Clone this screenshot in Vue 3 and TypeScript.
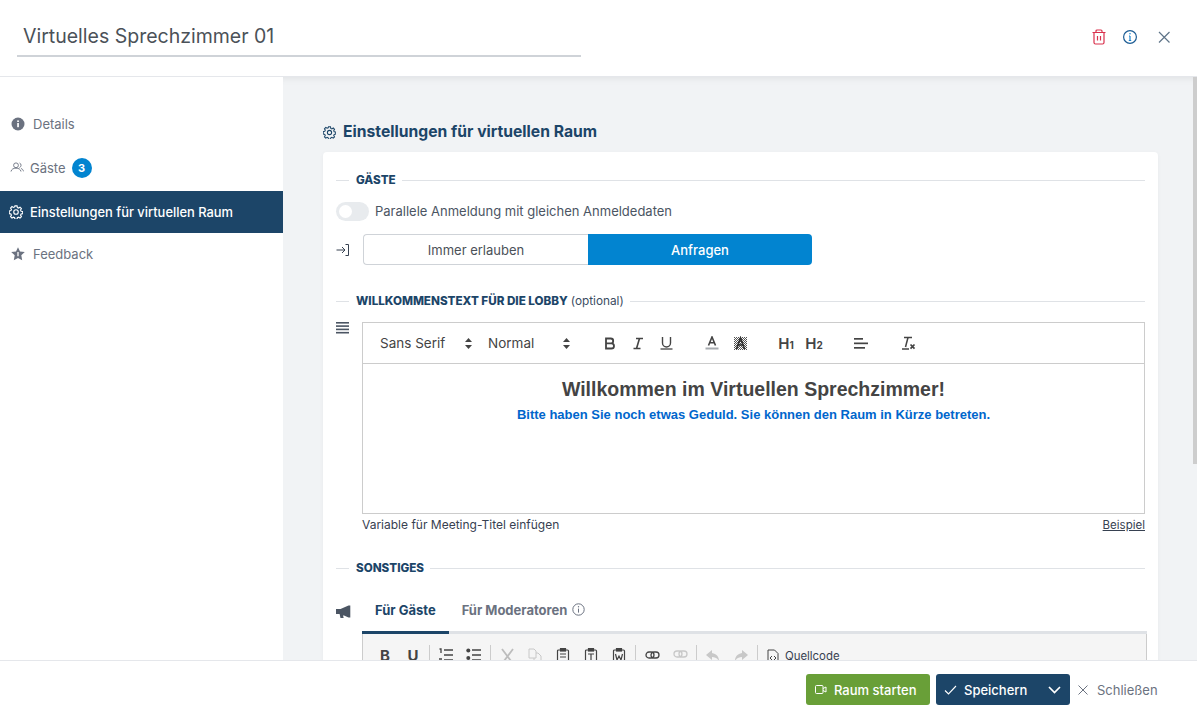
<script setup lang="ts">
const nav = [
  { key: 'details', label: 'Details' },
  { key: 'guests', label: 'Gäste', badge: 3 },
  { key: 'settings', label: 'Einstellungen für virtuellen Raum', active: true },
  { key: 'feedback', label: 'Feedback' },
]
</script>

<template>
  <div class="app">
    <header class="top">
      <div class="title">Virtuelles Sprechzimmer 01</div>
      <div class="top-icons">
        <svg width="16" height="16" viewBox="0 0 16 16" fill="none" stroke="#d9304c" stroke-width="1.2"><path d="M1.5 3.5h13M3 3.500v10a1.500 1.500 0 0 0 1.500 1.500h7a1.500 1.500 0 0 0 1.500-1.500v-10M5 3.500V2a1 1 0 0 1 1-1h4a1 1 0 0 1 1 1v1.500M6.500 7v4.500M9.500 7v4.500"/></svg>
        <svg width="16" height="16" viewBox="0 0 16 16" fill="none" stroke="#1c5c94" stroke-width="1.2"><circle cx="8" cy="8" r="6.4"/><path d="M8 7v4.500M6.800 11.500h2.400M7 7h1" stroke="#1b84cc"/><circle cx="8" cy="4.800" r=".8" fill="#1b84cc" stroke="none"/></svg>
        <svg class="x" width="16" height="16" viewBox="0 0 16 16" fill="none" stroke="#5f7488" stroke-width="1.2"><path d="M3 3l10.500 10.500M13.500 3L3 13.500"/></svg>
      </div>
    </header>

    <div class="middle">
      <aside class="side">
        <div v-for="n in nav" :key="n.key" class="nav" :class="[n.key, { active: n.active }]">
          <svg v-if="n.key === 'details'" width="14" height="14" viewBox="0 0 14 14"><circle cx="7" cy="7" r="6.500" fill="#6b7280"/><rect x="6.200" y="6" width="1.700" height="4.200" fill="#fff"/><rect x="6.200" y="3.400" width="1.700" height="1.600" fill="#fff"/></svg>
          <svg v-else-if="n.key === 'guests'" width="14" height="14" viewBox="0 0 14 14" fill="none" stroke="#6b7280" stroke-width=".9"><circle cx="6" cy="4.300" r="2.400"/><path d="M1 10.500c.5-2.500 2.500-3.300 5-3.300s4.500.8 5 3.300M9.500 2a2.400 2.400 0 0 1 0 4.500M11 7.500c1.300.4 2.200 1.300 2.500 2.800"/></svg>
          <svg v-else-if="n.key === 'settings'" width="14" height="14" viewBox="0 0 16 16" fill="none" stroke="#fff" stroke-width="1.300"><path d="M6.800 1h2.400l.4 1.900 1.300.6 1.700-1 1.600 1.600-1 1.700.6 1.300 1.900.4v2.400l-1.900.4-.6 1.300 1 1.700-1.600 1.600-1.700-1-1.300.6-.4 1.900H6.800l-.4-1.900-1.300-.6-1.700 1-1.600-1.600 1-1.700-.6-1.300-1.900-.4V6.800l1.900-.4.6-1.300-1-1.700 1.600-1.600 1.700 1 1.300-.6z"/><circle cx="8" cy="8" r="2.600"/></svg>
          <svg v-else width="14" height="14" viewBox="0 0 14 14"><path d="M7 .2l2 4.300 4.800.6-3.500 3.200.9 4.900L7 10.900l-4.200 2.300.9-4.900L.2 5.100 5 4.500z" fill="#6b7280"/><path d="M7 5v4.300" stroke="#fff" stroke-width="1.300"/></svg>
          <span>{{ n.label }}</span>
          <span v-if="n.badge" class="badge">{{ n.badge }}</span>
        </div>
      </aside>

      <main class="content">
        <h1 class="heading">
          <svg width="13" height="13" viewBox="0 0 16 16" fill="none" stroke="#1c4568" stroke-width="1.300"><path d="M6.800 1h2.400l.4 1.900 1.300.6 1.700-1 1.600 1.600-1 1.700.6 1.300 1.900.4v2.400l-1.900.4-.6 1.300 1 1.700-1.600 1.600-1.700-1-1.300.6-.4 1.900H6.800l-.4-1.900-1.300-.6-1.700 1-1.600-1.600 1-1.700-.6-1.300-1.900-.4V6.800l1.900-.4.6-1.300-1-1.700 1.600-1.600 1.700 1 1.300-.6z"/><circle cx="8" cy="8" r="2.600"/></svg>
          <span>Einstellungen für virtuellen Raum</span>
        </h1>

        <section class="card">
          <div class="legend first"><b>GÄSTE</b></div>

          <div class="toggle-row">
            <span class="toggle"><i></i></span>
            <span>Parallele Anmeldung mit gleichen Anmeldedaten</span>
          </div>

          <div class="seg-row">
            <svg width="14" height="14" viewBox="0 0 14 14" fill="none" stroke="#374151" stroke-width="1"><path d="M.5 7h8M6 4l3 3-3 3M9.500 1.500h3v11h-3"/></svg>
            <div class="seg">
              <span class="seg-a">Immer erlauben</span>
              <span class="seg-b">Anfragen</span>
            </div>
          </div>

          <div class="legend lobby"><b>WILLKOMMENSTEXT FÜR DIE LOBBY</b><span>(optional)</span></div>

          <div class="editor-row">
            <svg class="lines" width="13" height="12" viewBox="0 0 13 12" fill="#4b5563"><rect y="0" width="13" height="1.600"/><rect y="3.300" width="13" height="1.600"/><rect y="6.600" width="13" height="1.600"/><rect y="9.900" width="13" height="1.600"/></svg>
            <div class="editor-col">
              <div class="editor">
                <div class="tb">
                  <span class="pick p1">Sans Serif<svg width="7" height="11" viewBox="0 0 7 11" fill="#444"><path d="M3.500 0L7 4H0zM3.500 11L0 7h7z"/></svg></span>
                  <span class="pick p2">Normal<svg width="7" height="11" viewBox="0 0 7 11" fill="#444"><path d="M3.500 0L7 4H0zM3.500 11L0 7h7z"/></svg></span>
                  <div class="group g1">
                    <span class="tbtn"><svg width="12" height="13" viewBox="0 0 12 13" fill="none" stroke="#444" stroke-width="1.800"><path d="M2 1.500h4.800a2.400 2.400 0 0 1 0 4.800H2zM2 6.300h5.400a2.600 2.600 0 0 1 0 5.200H2z"/></svg></span>
                    <span class="tbtn"><svg width="12" height="13" viewBox="0 0 12 13" fill="none" stroke="#444" stroke-width="1.600"><path d="M4 1.500h7M1.500 11.500h7M7.500 1.500l-3 10"/></svg></span>
                    <span class="tbtn"><svg width="13" height="14" viewBox="0 0 13 14" fill="none" stroke="#444" stroke-width="1.400"><path d="M2.500 1v6a4 4 0 0 0 8 0V1"/><path d="M.5 13h12" stroke-width="1.300"/></svg></span>
                  </div>
                  <div class="group">
                    <span class="tbtn"><svg width="14" height="14" viewBox="0 0 14 14" fill="none"><path d="M3.500 9.500l3.500-8.500 3.500 8.500M4.700 6.800h4.600" stroke="#444" stroke-width="1.600"/><rect x="0.500" y="11.500" width="13" height="2" fill="#a7abb0"/></svg></span>
                    <span class="tbtn"><svg width="15" height="15" viewBox="0 0 15 15" fill="none"><defs><pattern id="dots" width="2" height="2" patternUnits="userSpaceOnUse"><rect width="1" height="1" fill="#555"/><rect x="1" y="1" width="1" height="1" fill="#555"/></pattern></defs><path d="M1 1h13v13H1zM1 1" fill="url(#dots)"/><path d="M3.500 13l4-11 4 11M5 9h5" stroke="#333" stroke-width="1.700"/></svg></span>
                  </div>
                  <div class="group">
                    <span class="tbtn hd">H<small>1</small></span>
                    <span class="tbtn hd">H<small>2</small></span>
                  </div>
                  <div class="group g4">
                    <span class="tbtn"><svg width="14" height="11" viewBox="0 0 14 11" fill="#444"><rect width="9" height="1.700"/><rect y="4.500" width="14" height="1.700"/><rect y="9" width="11" height="1.700"/></svg></span>
                  </div>
                  <div class="group g5">
                    <span class="tbtn"><svg width="15" height="14" viewBox="0 0 15 14" fill="none" stroke="#444"><path d="M3 1.500h8M1 13h7" stroke-width="1.300"/><path d="M7 1.500l-2.500 9.500" stroke-width="1.500"/><path d="M9.500 8.500l4 4.200M13.500 8.500l-4 4.200" stroke-width="1.700"/></svg></span>
                  </div>
                </div>
                <div class="body">
                  <h2>Willkommen im Virtuellen Sprechzimmer!</h2>
                  <p>Bitte haben Sie noch etwas Geduld. Sie können den Raum in Kürze betreten.</p>
                </div>
              </div>
              <div class="under">
                <span>Variable für Meeting-Titel einfügen</span>
                <u>Beispiel</u>
              </div>
            </div>
          </div>

          <div class="legend other"><b>SONSTIGES</b></div>

          <div class="tabs-row">
            <svg class="horn" width="15" height="13" viewBox="0 0 15 13" fill="#4b5563"><path d="M0 4h4.500L12.500.5h1.800v12h-1.800L8 10.400H7l.7 2.600H4.500L3.600 9H0z"/></svg>
            <div class="tabs-col">
              <div class="tabs">
                <span class="tab on">Für Gäste</span>
                <span class="tab">Für Moderatoren
                  <svg width="13" height="13" viewBox="0 0 13 13" fill="none" stroke="#6b7280" stroke-width="1"><circle cx="6.500" cy="6.500" r="5.700"/><path d="M6.500 5.600v4"/><circle cx="6.500" cy="3.700" r=".7" fill="#6b7280" stroke="none"/></svg>
                </span>
              </div>
              <div class="tiny">
                <span class="cb ltr">B</span>
                <span class="cb ltr">U</span>
                <i class="sep"></i>
                <span class="cb"><svg width="16" height="14" viewBox="0 0 16 14" stroke="#444" fill="none" stroke-width="1.300"><path d="M6 2h9M6 7h9M6 12h9M1.500 1h1.500v4M1 11h3"/></svg></span>
                <span class="cb"><svg width="16" height="14" viewBox="0 0 16 14" stroke="#444" fill="none" stroke-width="1.300"><path d="M6 2h9M6 7h9M6 12h9"/><circle cx="2.300" cy="2.500" r="2" fill="#444" stroke="none"/><circle cx="2.300" cy="10" r="2" fill="#444" stroke="none"/></svg></span>
                <i class="sep"></i>
                <span class="cb"><svg width="15" height="15" viewBox="0 0 15 15" stroke="#bdbdbd" fill="none" stroke-width="1.800"><path d="M2 1l9 12M13 1L4 13"/></svg></span>
                <span class="cb"><svg width="14" height="15" viewBox="0 0 14 15" stroke="#c8c8c8" fill="none"><path d="M1 1h5l2 2v7H1zM8 5h2l3 3v6H6v-4"/></svg></span>
                <span class="cb"><svg width="14" height="15" viewBox="0 0 14 15" stroke="#444" fill="none" stroke-width="1.200"><rect x="1.500" y="2" width="11" height="12" rx="1"/><rect x="4.500" y=".5" width="5" height="2.500" fill="#444"/><path d="M4 6h6M4 9h6"/></svg></span>
                <span class="cb"><svg width="14" height="15" viewBox="0 0 14 15" stroke="#444" fill="none" stroke-width="1.200"><rect x="1.500" y="2" width="11" height="12" rx="1"/><rect x="4.500" y=".5" width="5" height="2.500" fill="#444"/><path d="M4 6h6M7 6v6"/></svg></span>
                <span class="cb"><svg width="14" height="15" viewBox="0 0 14 15" stroke="#444" fill="none" stroke-width="1.200"><rect x="1.500" y="2" width="11" height="12" rx="1"/><rect x="4.500" y=".5" width="5" height="2.500" fill="#444"/><path d="M3.500 6l1.500 6 2-4 2 4 1.500-6"/></svg></span>
                <i class="sep"></i>
                <span class="cb"><svg width="15" height="14" viewBox="0 0 15 14" stroke="#444" fill="none" stroke-width="1.300"><rect x="1" y="4" width="8" height="6" rx="3"/><rect x="6" y="4" width="8" height="6" rx="3"/></svg></span>
                <span class="cb"><svg width="15" height="14" viewBox="0 0 15 14" stroke="#c8c8c8" fill="none" stroke-width="1.300"><rect x="1" y="3" width="8" height="6" rx="3"/><rect x="6" y="3" width="8" height="6" rx="3"/></svg></span>
                <i class="sep"></i>
                <span class="cb"><svg width="16" height="14" viewBox="0 0 16 14" fill="#c8c8c8"><path d="M7 2L1 7l6 5V9c3 0 5 1 7 4 0-4-2-7-7-8z"/></svg></span>
                <span class="cb"><svg width="16" height="14" viewBox="0 0 16 14" fill="#c8c8c8"><path d="M9 2l6 5-6 5V9c-3 0-5 1-7 4 0-4 2-7 7-8z"/></svg></span>
                <i class="sep"></i>
                <svg class="srci" width="12" height="15" viewBox="0 0 12 15" stroke="#444" fill="none"><path d="M1 1h6.500L11 4.500V14H1zM5 7L3 9l2 2M7 7l2 2-2 2"/></svg>
                <span class="src">Quellcode</span>
              </div>
            </div>
          </div>
        </section>
      </main>
      <div class="scroll"></div>
    </div>

    <footer class="foot">
      <button class="btn green">
        <svg width="12" height="11" viewBox="0 0 12 11" fill="none" stroke="#fff"><rect x=".5" y="1.500" width="7.500" height="8" rx="1"/><path d="M8 4.500l3-1.500v5L8 6.500"/></svg>
        Raum starten
      </button>
      <div class="btn navy">
        <svg width="13" height="10" viewBox="0 0 13 10" fill="none" stroke="#fff" stroke-width="1.100"><path d="M1 5.500l3.500 3.500L12 1"/></svg>
        <span>Speichern</span>
        <svg class="chev" width="13" height="8" viewBox="0 0 13 8" fill="none" stroke="#fff" stroke-width="1.700"><path d="M1 1l5.500 5.500L12 1"/></svg>
      </div>
      <div class="close">
        <svg width="10" height="10" viewBox="0 0 10 10" fill="none" stroke="#6b7280" stroke-width="1"><path d="M.5.500l9 9M9.500.500l-9 9"/></svg>
        Schließen
      </div>
    </footer>
  </div>
</template>

<style>
html, body { margin: 0; height: 100%; overflow: hidden; background: #fff; }
</style>

<style scoped>
.app { width: 1197px; height: 717px; display: flex; flex-direction: column; font-family: Inter, "Liberation Sans", sans-serif; color: #374151; overflow: hidden; }
.top { height: 76px; flex: none; display: flex; justify-content: space-between; align-items: flex-start; border-bottom: 1px solid #e5e7eb; box-sizing: content-box; position: relative; z-index: 2; }
.title { margin: 21px 0 0 17px; padding-left: 6px; width: 558px; height: 34px; border-bottom: 2px solid #cfd3d8; font-size: 19.500px; line-height: 31px; color: #4b5158; }
.top-icons { display: flex; gap: 15px; margin: 29px 25px 0 0; }
.top-icons .x { margin-left: 3px; }
.middle { flex: 1; min-height: 0; display: flex; position: relative; }
.side { width: 283px; flex: none; padding-top: 26px; background: #fff; box-sizing: border-box; }
.nav { height: 42px; display: flex; align-items: center; font-size: 13px; color: #6b7280; padding-left: 11px; gap: 8px; }
.nav.details { margin-bottom: -2px; }
.nav.guests { height: 48px; padding-top: 1px; box-sizing: border-box; padding-left: 10px; gap: 6px; }
.nav.settings { padding-left: 9px; gap: 7px; background: #1c4568; color: #fff; font-size: 12.900px; font-weight: 500; }
.nav.feedback { gap: 8px; }
.badge { width: 20px; height: 20px; border-radius: 50%; background: #0284d0; color: #fff; font-size: 11px; font-weight: 700; display: flex; align-items: center; justify-content: center; }
.content { flex: 1; min-width: 0; background: #f1f3f5; box-shadow: inset 0 8px 8px -8px rgba(0,0,0,.1); padding: 46px 39px 0 40px; overflow: hidden; box-sizing: border-box; }
.heading { margin: 0 0 11px; display: flex; align-items: center; gap: 7px; font-size: 15.700px; line-height: 18px; font-weight: 700; color: #1c4568; height: 18px; }
.card { background: #fff; border-radius: 4px; height: 600px; padding: 20px 13px 0; box-sizing: border-box; box-shadow: 0 1px 4px rgba(0,0,0,.04); }
.legend { display: flex; align-items: center; font-size: 11.650px; line-height: 16px; color: #1c4568; }
.legend::before { content: ""; width: 13px; height: 1px; background: #dfe2e6; margin-right: 7px; }
.legend::after { content: ""; flex: 1; height: 1px; background: #dfe2e6; margin-left: 6px; }
.legend b { font-weight: 800; }
.legend span { margin-left: 3px; font-size: 11.800px; color: #3a4c5f; }
.first { margin-top: 0; }
.toggle-row { display: flex; align-items: center; gap: 6px; margin-top: 13px; font-size: 13px; height: 20px; color: #4b5563; }
.toggle { width: 33px; height: 19px; border-radius: 10px; background: #e8ebee; position: relative; }
.toggle i { position: absolute; left: 3px; top: 3px; width: 13px; height: 13px; border-radius: 50%; background: #fff; }
.seg-row { display: flex; align-items: center; margin-top: 13px; gap: 13px; }
.seg { display: flex; width: 449px; height: 31px; font-size: 13px; }
.seg-a { width: 225px; border: 1px solid #cfd3d8; border-right: 0; border-radius: 4px 0 0 4px; display: flex; align-items: center; justify-content: center; box-sizing: border-box; color: #4b5158; }
.seg-b { flex: 1; background: #0284d0; color: #fff; font-weight: 500; display: flex; align-items: center; justify-content: center; border-radius: 0 4px 4px 0; }
.lobby { margin-top: 28px; }
.editor-row { display: flex; margin-top: 13px; gap: 13px; }
.lines { margin-top: 0; flex: none; }
.editor-col { flex: 1; min-width: 0; }
.editor { border: 1px solid #ccc; height: 192px; box-sizing: border-box; }
.tb { height: 40px; border-bottom: 1px solid #ccc; display: flex; align-items: center; color: #444; font-size: 13.500px; }
.pick { display: flex; align-items: center; justify-content: space-between; height: 100%; padding-right: 2px; box-sizing: border-box; }
.p1 { width: 94px; margin-left: 17px; }
.p2 { width: 84px; margin-left: 14px; }
.group { display: flex; align-items: center; margin-left: 18px; }
.g1 { margin-left: 24px; }
.g4 { margin-left: 19px; }
.g5 { margin-left: 19px; }
.tbtn { width: 28px; display: flex; align-items: center; justify-content: center; }
.hd { font-size: 15px; font-weight: 600; color: #444; }
.hd small { font-size: 10px; font-weight: 700; margin-top: 3px; }
.body { text-align: center; padding-top: 13px; }
.body h2 { margin: 0; font: 700 19.500px/24px "Liberation Sans", Arial, sans-serif; color: #444; }
.body p { margin: 6px 0 0; font: 700 13px/16px "Liberation Sans", Arial, sans-serif; color: #0066cc; }
.under { display: flex; justify-content: space-between; align-items: baseline; font-size: 12px; line-height: 16px; margin-top: 3px; color: #374151; }
.under u { color: #374151; font-size: 11.500px; }
.other { margin-top: 27px; }
.tabs-row { display: flex; margin-top: 19px; gap: 11px; }
.horn { margin-top: 10px; flex: none; }
.tabs-col { flex: 1; min-width: 0; margin-right: -2px; }
.tabs { display: flex; height: 36px; border-bottom: 3px solid #dfe2e6; font-size: 13px; font-weight: 700; color: #6b7280; }
.tab { padding: 0 13px 10px; display: flex; align-items: center; gap: 5px; margin-bottom: -3px; box-sizing: border-box; height: 39px; }
.tab.on { color: #1c4568; border-bottom: 3px solid #1c4568; padding-bottom: 7px; }
.tiny { height: 60px; background: #f5f5f5; border: 1px solid #ccc; border-top: 0; display: flex; align-items: flex-start; padding: 11px 0 0 8px; box-sizing: border-box; }
.cb { width: 28px; height: 20px; display: flex; justify-content: center; align-items: center; flex: none; }
.ltr { font-size: 15px; font-weight: 700; color: #444; }
.sep { width: 1px; height: 20px; background: #ccc; margin: 0 2px; flex: none; }
.srci { margin-left: 7px; margin-top: 4px; flex: none; }
.src { font-size: 11.400px; line-height: 19px; margin: 2px 0 0 6px; color: #374151; }
.scroll { position: absolute; right: 0; top: 0; width: 4px; height: 387px; background: #cdcdcd; }
.foot { height: 57px; flex: none; background: #fff; border-top: 1px solid #e5e7eb; display: flex; align-items: flex-start; padding: 13px 0 0 806px; box-sizing: border-box; position: relative; z-index: 2; }
.btn { height: 31px; border: 0; border-radius: 3px; color: #fff; display: flex; align-items: center; font: 500 13px Inter, sans-serif; padding: 0; box-sizing: border-box; }
.green { background: #699f38; width: 124px; padding-left: 9px; gap: 7px; }
.navy { background: #1c4568; width: 134px; margin-left: 6px; padding-left: 8px; gap: 7px; position: relative; }
.chev { position: absolute; right: 9px; top: 12px; }
.close { height: 31px; display: flex; align-items: center; gap: 9px; font-size: 13px; color: #6b7280; margin-left: 8px; }
</style>
